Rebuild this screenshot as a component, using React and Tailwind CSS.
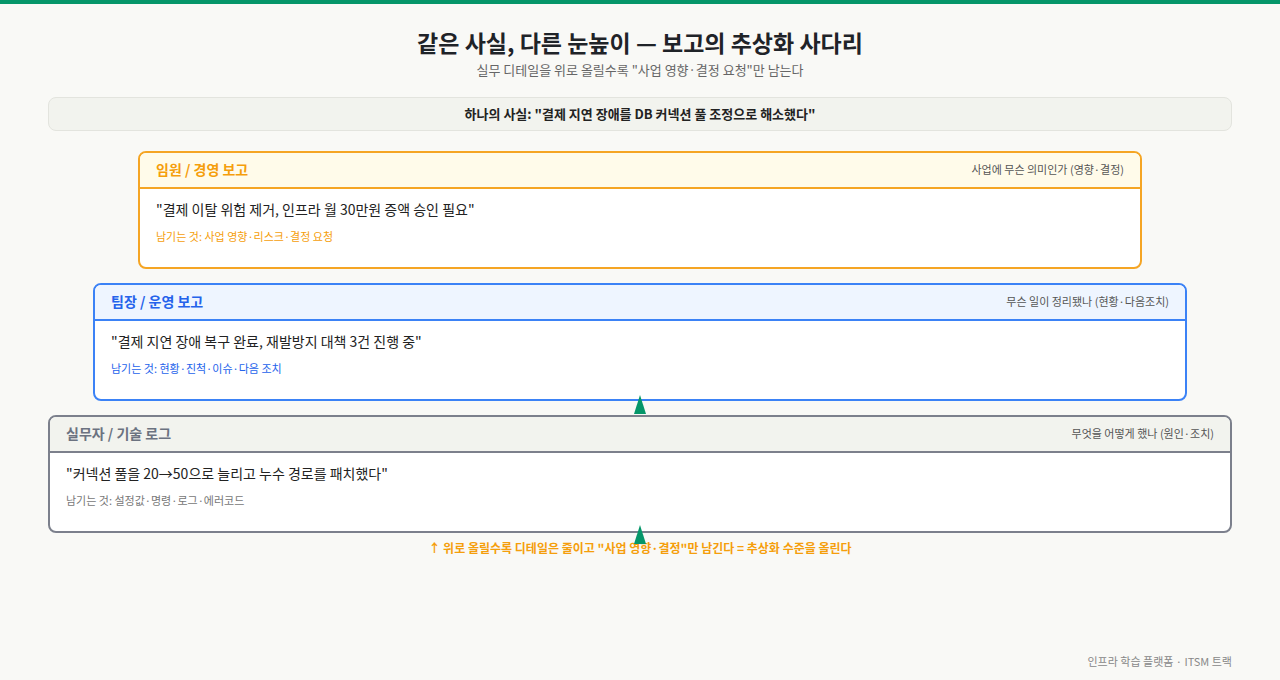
export default function App() {
  const f = { fontFamily: '"Noto Sans CJK KR", "Noto Sans", sans-serif' };
  const Box = ({ cls, headBg, border, titleColor, title, right, quote, keep, keepColor }) => (
    <div className={`rounded-lg border-2 ${border} bg-white overflow-hidden ${cls}`}>
      <div className={`flex items-center justify-between h-[36px] px-4 border-b-2 ${border} ${headBg}`}>
        <span className={`text-[14px] font-bold ${titleColor}`}>{title}</span>
        <span className="text-[11px] text-[#555]">{right}</span>
      </div>
      <div className="px-4 pt-[10px] h-[78px]">
        <div className="text-[14px] text-[#222]">{quote}</div>
        <div className={`text-[11px] mt-[8px] ${keepColor}`}>{keep}</div>
      </div>
    </div>
  );
  return (
    <div style={f} className="w-[1280px] h-[680px] bg-[#f9f9f6] border-t-4 border-[#059669] flex flex-col items-center relative">
      <h1 className="mt-[22px] text-[23px] font-bold text-[#1f2328] leading-[32px]">같은 사실, 다른 눈높이 — 보고의 추상화 사다리</h1>
      <p className="text-[13px] text-[#666] mt-[2px]">실무 디테일을 위로 올릴수록 "사업 영향·결정 요청"만 남는다</p>
      <div className="w-[1184px] mt-[17px] h-[34px] rounded-lg bg-[#f2f3ee] border border-[#e3e4de] flex items-center justify-center text-[13px] font-bold text-[#222]">
        하나의 사실: "결제 지연 장애를 DB 커넥션 풀 조정으로 해소했다"
      </div>
      <div className="relative w-[1184px] mt-[20px] flex flex-col items-center gap-[14px]">
        <Box cls="w-[1004px]" headBg="bg-[#fffbea]" border="border-[#f5a524]" titleColor="text-[#f59e0b]" title="임원 / 경영 보고" right="사업에 무슨 의미인가 (영향·결정)" quote={'"결제 이탈 위험 제거, 인프라 월 30만원 증액 승인 필요"'} keep="남기는 것: 사업 영향·리스크·결정 요청" keepColor="text-[#f59e0b]" />
        <Box cls="w-[1094px]" headBg="bg-[#eef5ff]" border="border-[#3b82f6]" titleColor="text-[#2563eb]" title="팀장 / 운영 보고" right="무슨 일이 정리됐나 (현황·다음조치)" quote={'"결제 지연 장애 복구 완료, 재발방지 대책 3건 진행 중"'} keep="남기는 것: 현황·진척·이슈·다음 조치" keepColor="text-[#2563eb]" />
        <Box cls="w-[1184px]" headBg="bg-[#f2f3ee]" border="border-[#7c808c]" titleColor="text-[#6b7280]" title="실무자 / 기술 로그" right="무엇을 어떻게 했나 (원인·조치)" quote={'"커넥션 풀을 20→50으로 늘리고 누수 경로를 패치했다"'} keep="남기는 것: 설정값·명령·로그·에러코드" keepColor="text-[#777]" />
        <svg className="absolute left-[586px] top-[244px]" width="12" height="19" viewBox="0 0 12 19"><polygon points="6,0 12,19 0,19" fill="#059669" /></svg>
        <svg className="absolute left-[586px] top-[374px]" width="12" height="19" viewBox="0 0 12 19"><polygon points="6,0 12,19 0,19" fill="#059669" /></svg>
      </div>
      <div className="mt-[6px] text-[12px] font-bold text-[#f59e0b]">↑ 위로 올릴수록 디테일은 줄이고 "사업 영향·결정"만 남긴다 = 추상화 수준을 올린다</div>
      <div className="absolute right-[48px] bottom-[11px] text-[11px] text-[#888]">인프라 학습 플랫폼 · ITSM 트랙</div>
    </div>
  );
}
